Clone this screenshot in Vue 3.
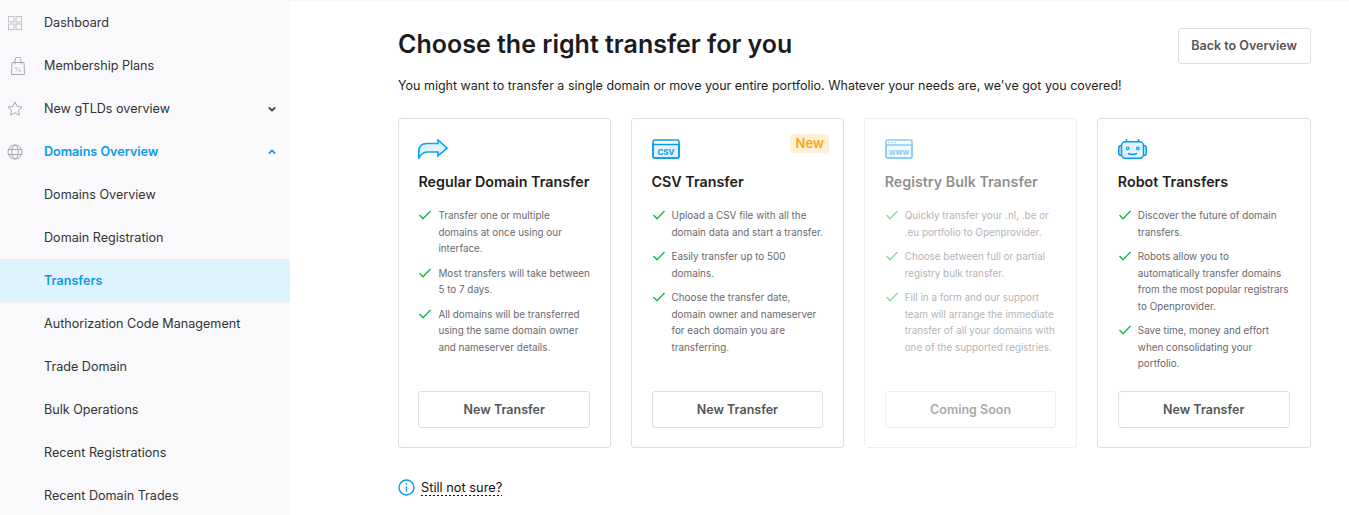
<template>
  <div class="page">
    <aside class="sidebar">
      <a
        v-for="(item, i) in menu"
        :key="i"
        class="menu-item"
        :class="{ active: item.active, open: item.open }"
      >
        <span class="menu-icon">
          <svg v-if="item.icon === 'grid'" width="14" height="14" viewBox="0 0 14 14" fill="none" stroke="#c4c4c8">
            <rect x="0.5" y="0.5" width="5.500" height="5.500" /><rect x="8" y="0.5" width="5.500" height="5.500" />
            <rect x="0.5" y="8" width="5.500" height="5.500" /><rect x="8" y="8" width="5.500" height="5.500" />
          </svg>
          <svg v-else-if="item.icon === 'bag'" class="bag" width="14" height="18" viewBox="0 0 14 18" fill="none" stroke="#a9a9ae">
            <path d="M1 5.500h12l.5 12H.5z" /><path d="M4 7.500V3a3 3 0 0 1 6 0v4.500" />
            <path d="M5 14.500l4-4" stroke-width="0.8" />
            <circle cx="5" cy="11" r="0.7" stroke-width="0.6" /><circle cx="9" cy="14" r="0.7" stroke-width="0.6" />
          </svg>
          <svg v-else-if="item.icon === 'star'" width="16" height="15" viewBox="0 0 16 15" fill="none" stroke="#a9a9ae">
            <path d="M8 1l2.100 4.500 4.900.6-3.600 3.300 1 4.800L8 11.800l-4.400 2.400 1-4.800L1 6.100l4.900-.6z" />
          </svg>
          <svg v-else-if="item.icon === 'globe'" width="16" height="16" viewBox="0 0 16 16" fill="none" stroke="#a9a9ae">
            <circle cx="8" cy="8" r="7" /><ellipse cx="8" cy="8" rx="3.200" ry="7" /><path d="M1.200 5.500h13.600M1.200 10.500h13.600" />
          </svg>
        </span>
        <span class="menu-label">{{ item.label }}</span>
        <svg v-if="item.arrow" class="chevron" width="8" height="6" viewBox="0 0 8 6" fill="none" stroke-width="1.6">
          <path :d="item.open ? 'M0.8 4.600L4 1.400l3.200 3.200' : 'M0.8 1.400L4 4.600l3.200-3.200'" />
        </svg>
      </a>
    </aside>

    <div class="main">
      <div class="content">
        <div class="head">
          <h1>Choose the right transfer for you</h1>
          <button class="back">Back to Overview</button>
        </div>
        <p class="intro">You might want to transfer a single domain or move your entire portfolio. Whatever your needs are, we've got you covered!</p>

        <div class="cards">
          <section v-for="card in cards" :key="card.title" class="card" :class="{ disabled: card.disabled }">
            <span v-if="card.badge" class="badge">{{ card.badge }}</span>
            <div class="card-icon">
              <svg v-if="card.icon === 'arrow'" width="30" height="21" viewBox="0 0 30 21" fill="#def3fd" stroke="#0aa5f5" stroke-width="1.600">
                <path d="M0.800 19.800V12.500C0.800 7 4 4.500 9 4.500H20V1L29 9.200L20 16.800V13H9.500C5 13 2.500 15.500 0.800 19.800Z" />
              </svg>
              <svg v-else-if="card.icon === 'csv'" width="28" height="20" viewBox="0 0 28 20" fill="none" stroke="#0b9ae6" stroke-width="1.500">
                <path d="M1 5.500h26V17a2 2 0 0 1-2 2H3a2 2 0 0 1-2-2z" fill="#def3fd" />
                <rect x="1" y="1" width="26" height="18" rx="2" />
                <text x="14" y="15.700" text-anchor="middle" class="icon-text" stroke="none" fill="#0b9ae6">CSV</text>
              </svg>
              <svg v-else-if="card.icon === 'www'" width="28" height="20" viewBox="0 0 28 20" fill="none" stroke="#0b9ae6" stroke-width="1.500">
                <path d="M1 6h26V17a2 2 0 0 1-2 2H3a2 2 0 0 1-2-2z" fill="#def3fd" />
                <rect x="1" y="1" width="26" height="18" rx="2" />
                <path d="M3.500 3.500h1.500M6.500 3.500h1.500M9.500 3.500h1.500" stroke-width="1" />
                <text x="14" y="15.800" text-anchor="middle" class="icon-text" stroke="none" fill="#0b9ae6">www</text>
              </svg>
              <svg v-else width="29" height="20" viewBox="0 0 29 20" fill="none" stroke="#0b9ae6" stroke-width="1.500">
                <path d="M3.500 6.500H3C1.500 6.500.8 7.500.8 9v5c0 1.500.7 2.500 2.200 2.500h.5M25.500 6.500h.5c1.500 0 2.200 1 2.200 2.500v5c0 1.500-.7 2.500-2.200 2.500h-.5" fill="#def3fd" />
                <rect x="3.500" y="2.800" width="22" height="16.500" rx="4" fill="#def3fd" />
                <path d="M8.500 2.800V0M20.500 2.800V0" />
                <circle cx="9.700" cy="9.300" r="1.300" stroke-width="1.200" /><circle cx="19.800" cy="9.300" r="1.300" stroke-width="1.200" />
                <path d="M10 14.500c2.500 1.200 6.500 1.200 9 0" />
              </svg>
            </div>
            <h2>{{ card.title }}</h2>
            <ul>
              <li v-for="point in card.points" :key="point">
                <svg width="14" height="10" viewBox="0 0 14 10" fill="none" stroke="#0fb83f" stroke-width="1.300">
                  <path d="M1.500 5l3.500 3.800L12.500 1" />
                </svg>
                <span>{{ point }}</span>
              </li>
            </ul>
            <button class="action">{{ card.action }}</button>
          </section>
        </div>

        <div class="help">
          <svg width="17" height="17" viewBox="0 0 17 17" fill="none" stroke="#0b9ae6" stroke-width="1.400">
            <circle cx="8.500" cy="8.500" r="7.500" /><path d="M8.500 7.500v5M8.500 4.200v1.600" />
          </svg>
          <span>Still not sure?</span>
        </div>
      </div>
    </div>
  </div>
</template>

<script setup>
const menu = [
  { label: 'Dashboard', icon: 'grid' },
  { label: 'Membership Plans', icon: 'bag' },
  { label: 'New gTLDs overview', icon: 'star', arrow: true },
  { label: 'Domains Overview', icon: 'globe', arrow: true, open: true },
  { label: 'Domains Overview' },
  { label: 'Domain Registration' },
  { label: 'Transfers', active: true },
  { label: 'Authorization Code Management' },
  { label: 'Trade Domain' },
  { label: 'Bulk Operations' },
  { label: 'Recent Registrations' },
  { label: 'Recent Domain Trades' }
]

// line breaks are kept as in the original cards
const cards = [
  {
    title: 'Regular Domain Transfer',
    icon: 'arrow',
    action: 'New Transfer',
    points: [
      'Transfer one or multiple\ndomains at once using our\ninterface.',
      'Most transfers will take between\n5 to 7 days.',
      'All domains will be transferred\nusing the same domain owner\nand nameserver details.'
    ]
  },
  {
    title: 'CSV Transfer',
    icon: 'csv',
    badge: 'New',
    action: 'New Transfer',
    points: [
      'Upload a CSV file with all the\ndomain data and start a transfer.',
      'Easily transfer up to 500\ndomains.',
      'Choose the transfer date,\ndomain owner and nameserver\nfor each domain you are\ntransferring.'
    ]
  },
  {
    title: 'Registry Bulk Transfer',
    icon: 'www',
    disabled: true,
    action: 'Coming Soon',
    points: [
      'Quickly transfer your .nl, .be or\n.eu portfolio to Openprovider.',
      'Choose between full or partial\nregistry bulk transfer.',
      'Fill in a form and our support\nteam will arrange the immediate\ntransfer of all your domains with\none of the supported registries.'
    ]
  },
  {
    title: 'Robot Transfers',
    icon: 'robot',
    action: 'New Transfer',
    points: [
      'Discover the future of domain\ntransfers.',
      'Robots allow you to\nautomatically transfer domains\nfrom the most popular registrars\nto Openprovider.',
      'Save time, money and effort\nwhen consolidating your\nportfolio.'
    ]
  }
]
</script>

<style>
html,
body {
  margin: 0;
  height: 515px;
  overflow: hidden;
  background: #fff;
}
</style>

<style scoped>
.page {
  display: flex;
  height: 515px;
  overflow: hidden;
  font-family: Inter, "Liberation Sans", sans-serif;
  color: #1f1f21;
}

.sidebar {
  flex: none;
  width: 290px;
  height: 515px;
  padding-top: 1px;
  box-sizing: border-box;
  background: #f9f9fb;
}

.menu-item {
  display: flex;
  align-items: center;
  height: 43px;
  font-size: 12.6px;
  color: #333336;
}

.menu-icon {
  flex: none;
  display: flex;
  align-items: center;
  justify-content: center;
  width: 30px;
  margin-right: 14px;
}

.bag {
  margin-left: 5px;
}

.menu-label {
  flex: 1;
}

.chevron {
  margin-right: 14px;
  stroke: #333336;
}

.menu-item.open {
  color: #0b9ae6;
  font-weight: 600;
}

.menu-item.open .chevron {
  stroke: #0b9ae6;
}

.menu-item.active {
  background: #def3fd;
  color: #0b9ae6;
  font-weight: 600;
}

.main {
  flex: 1;
  padding-left: 108px;
  box-shadow: inset 0 2px 2px -1px rgba(0, 0, 0, 0.05);
}

.content {
  width: 912.6px;
}

.head {
  display: flex;
  justify-content: space-between;
  align-items: flex-start;
  padding-top: 28px;
}

h1 {
  margin: 0;
  font-size: 25px;
  line-height: 32px;
  font-weight: 600;
  color: #1c1c1e;
}

.back {
  width: 133px;
  height: 36px;
  padding: 0 0 2px;
  border: 1px solid #dfdfe1;
  border-radius: 3px;
  background: #fff;
  font: 600 12.5px Inter, "Liberation Sans", sans-serif;
  color: #555558;
}

.intro {
  margin: 13px 0 0;
  font-size: 12.5px;
  line-height: 18px;
  color: #1f1f21;
}

.cards {
  display: grid;
  grid-template-columns: repeat(4, minmax(0, 1fr));
  column-gap: 20px;
  margin-top: 23px;
}

.card {
  position: relative;
  display: flex;
  flex-direction: column;
  box-sizing: border-box;
  height: 330px;
  padding: 19px 20px 19px 19.4px;
  border: 1px solid #dfdfe1;
  border-radius: 3px;
}

.card-icon {
  flex: none;
  height: 22px;
  display: flex;
  align-items: center;
}

.badge {
  position: absolute;
  top: 15px;
  right: 14px;
  padding: 0 5.5px;
  height: 19px;
  line-height: 19px;
  border-radius: 3px;
  background: #fff0d9;
  color: #ffa30f;
  font-size: 13px;
  font-weight: 600;
}

h2 {
  flex: none;
  margin: 12px 0 0;
  font-size: 14.3px;
  line-height: 20px;
  font-weight: 600;
  color: #1f1f21;
}

ul {
  flex: 1;
  min-height: 0;
  margin: 15px 0 0;
  padding: 0;
  list-style: none;
}

li {
  display: flex;
  margin-bottom: 8px;
  font-size: 9.9px;
  line-height: 16.5px;
  color: #69696d;
  white-space: pre;
}

li svg {
  flex: none;
  margin: 3px 6px 0 0;
}

.action {
  flex: none;
  height: 37px;
  padding: 0;
  border: 1px solid #dfdfe1;
  border-radius: 3px;
  background: #fff;
  font: 600 12.5px Inter, "Liberation Sans", sans-serif;
  color: #555558;
}

.card.disabled {
  border-color: #efeff0;
}

.card.disabled > * {
  opacity: 0.5;
}

.help {
  display: flex;
  align-items: center;
  gap: 6px;
  margin-top: 31px;
  font-size: 12.8px;
  color: #111;
}

.help span {
  line-height: 17px;
  background: linear-gradient(to right, #111 50%, transparent 0) left bottom / 4px 1px repeat-x;
}

.icon-text {
  font: 700 8px Inter, "Liberation Sans", sans-serif;
}
</style>
